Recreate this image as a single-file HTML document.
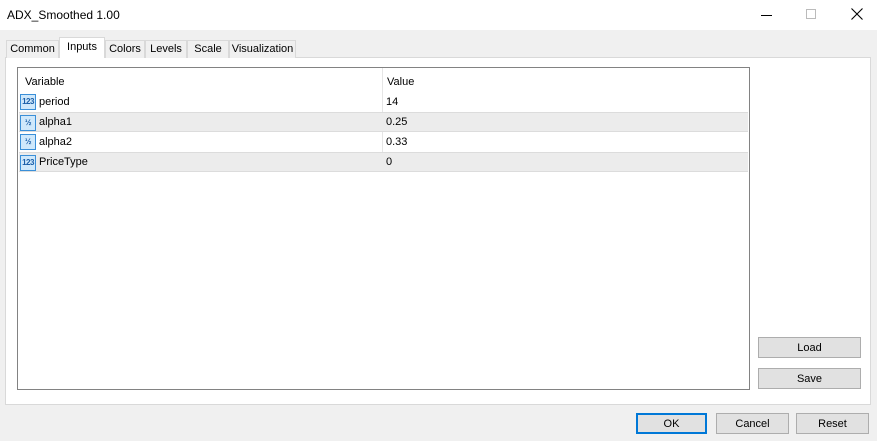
<!DOCTYPE html><html><head><style>
*{margin:0;padding:0;box-sizing:border-box}
body{width:877px;height:441px;background:#f0f0f0;font-family:"Liberation Sans",sans-serif;font-size:11px;color:#000;position:relative;overflow:hidden}
.a{position:absolute}
.tab{position:absolute;top:40px;height:18px;border:1px solid #d9d9d9;border-bottom:none;background:#f0f0f0;text-align:center;line-height:17px}
.btn{position:absolute;background:#e1e1e1;border:1px solid #adadad;text-align:center;line-height:21px;font-size:11px}
.row{position:absolute;left:19px;width:729px;height:20px;line-height:21px}
.row.g{background:#ececec;border-top:1px solid #dcdcdc;border-bottom:1px solid #dcdcdc}
.row span{position:absolute}
.ic{position:absolute;left:1px;top:2px;width:16px;height:16px;background:#cfe8fb;border:1px solid #3a8fd8;font-size:8px;line-height:14px;color:#1a5ea8;text-align:center;letter-spacing:-0.5px;font-weight:bold}
</style></head><body>
<div class="a" style="left:0;top:0;width:877px;height:30px;background:#fff"></div>
<div class="a" style="left:7px;top:8px;font-size:12px">ADX_Smoothed 1.00</div>
<div class="a" style="left:761px;top:15px;width:11px;height:1px;background:#000"></div>
<div class="a" style="left:806px;top:9px;width:10px;height:10px;border:1px solid #bbb"></div>
<svg class="a" style="left:851px;top:8px" width="12" height="12"><path d="M0.5 0.5L11.5 11.5M11.5 0.5L0.5 11.5" stroke="#000" stroke-width="1.1"/></svg>
<div class="a" style="left:5px;top:57px;width:866px;height:348px;background:#fff;border:1px solid #d9d9d9"></div>
<div class="tab" style="left:6px;width:53px">Common</div>
<div class="tab" style="left:59px;top:37px;height:21px;width:46px;background:#fff;line-height:19px">Inputs</div>
<div class="tab" style="left:105px;width:40px">Colors</div>
<div class="tab" style="left:145px;width:42px">Levels</div>
<div class="tab" style="left:187px;width:42px">Scale</div>
<div class="tab" style="left:229px;width:67px">Visualization</div>
<div class="a" style="left:17px;top:67px;width:733px;height:323px;border:1px solid #828282;background:#fff"></div>
<div class="a" style="left:382px;top:68px;width:1px;height:104px;background:#e5e5e5"></div>
<div class="a" style="left:25px;top:76px">Variable</div>
<div class="a" style="left:387px;top:76px">Value</div>
<div class="row" style="top:92px"><div class="ic">123</div><span style="left:20px">period</span><span style="left:367px">14</span></div>
<div class="row g" style="top:112px"><div class="ic">½</div><span style="left:20px;top:-1px">alpha1</span><span style="left:367px;top:-1px">0.25</span></div>
<div class="row" style="top:132px"><div class="ic">½</div><span style="left:20px">alpha2</span><span style="left:367px">0.33</span></div>
<div class="row g" style="top:152px"><div class="ic">123</div><span style="left:20px;top:-1px">PriceType</span><span style="left:367px;top:-1px">0</span></div>
<div class="btn" style="left:758px;top:337px;width:103px;height:21px">Load</div>
<div class="btn" style="left:758px;top:368px;width:103px;height:21px">Save</div>
<div class="btn" style="left:636px;top:413px;width:71px;height:21px;border:2px solid #0078d7;line-height:19px">OK</div>
<div class="btn" style="left:716px;top:413px;width:73px;height:21px">Cancel</div>
<div class="btn" style="left:796px;top:413px;width:73px;height:21px">Reset</div>
</body></html>
